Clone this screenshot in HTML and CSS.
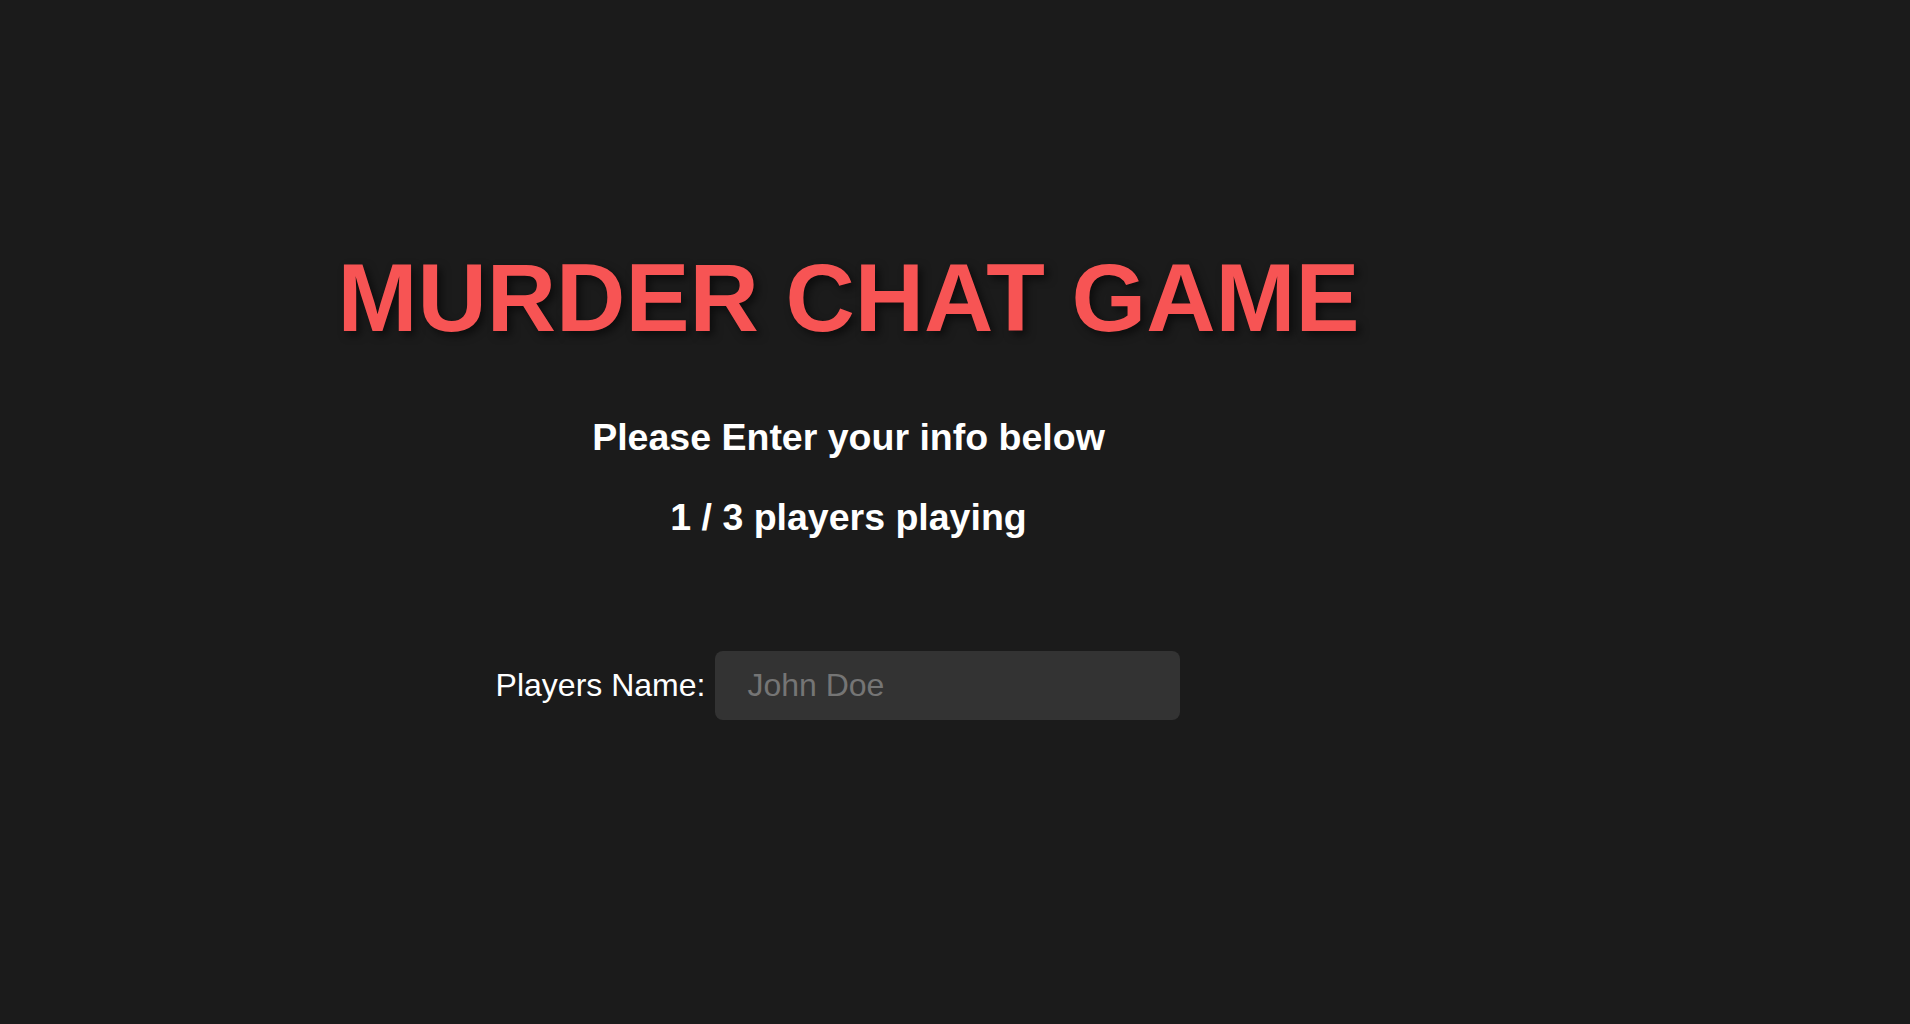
FILE: index.html
```html
<!DOCTYPE html>
<html lang="en">
<head>
<meta charset="utf-8">
<title>Murder Chat Game</title>
<link rel="stylesheet" href="styles.css">
</head>
<body>
<main class="page">
  <h1 class="title">MURDER CHAT GAME</h1>
  <h2 class="subtitle">Please Enter your info below</h2>
  <h2 class="subtitle count">1 / 3 players playing</h2>
  <form class="join-form">
    <label class="field-label" for="player-name">Players Name:</label>
    <input class="field-input" id="player-name" type="text" placeholder="John Doe">
  </form>
</main>
</body>
</html>
```

FILE: styles.css
```css
html, body {
  margin: 0;
  padding: 0;
  background: #1b1b1b;
}

body {
  font-family: "Liberation Sans", Arial, sans-serif;
  color: #ffffff;
  min-height: 1024px;
}

.page {
  width: 1697px;
  padding-top: 243px;
  display: flex;
  flex-direction: column;
  align-items: center;
}

.title {
  margin: 0;
  font-size: 96px;
  line-height: 110px;
  font-weight: 700;
  color: #f75454;
  text-shadow: 4px 4px 8px rgba(0, 0, 0, 0.55);
}

.subtitle {
  margin: 63px 0 0;
  font-size: 37.5px;
  line-height: 43px;
  font-weight: 700;
  color: #ffffff;
}

.count {
  margin-top: 37px;
}

.join-form {
  margin-top: 112px;
  display: flex;
  align-items: center;
  gap: 10px;
  padding-right: 21px;
}

.field-label {
  font-size: 32px;
  color: #ffffff;
}

.field-input {
  box-sizing: border-box;
  width: 465px;
  height: 69px;
  padding: 0 32px;
  border: none;
  border-radius: 8px;
  background: #333333;
  color: #ffffff;
  font-family: "Liberation Sans", Arial, sans-serif;
  font-size: 32px;
  outline: none;
}

.field-input::placeholder {
  color: #757575;
}
```
